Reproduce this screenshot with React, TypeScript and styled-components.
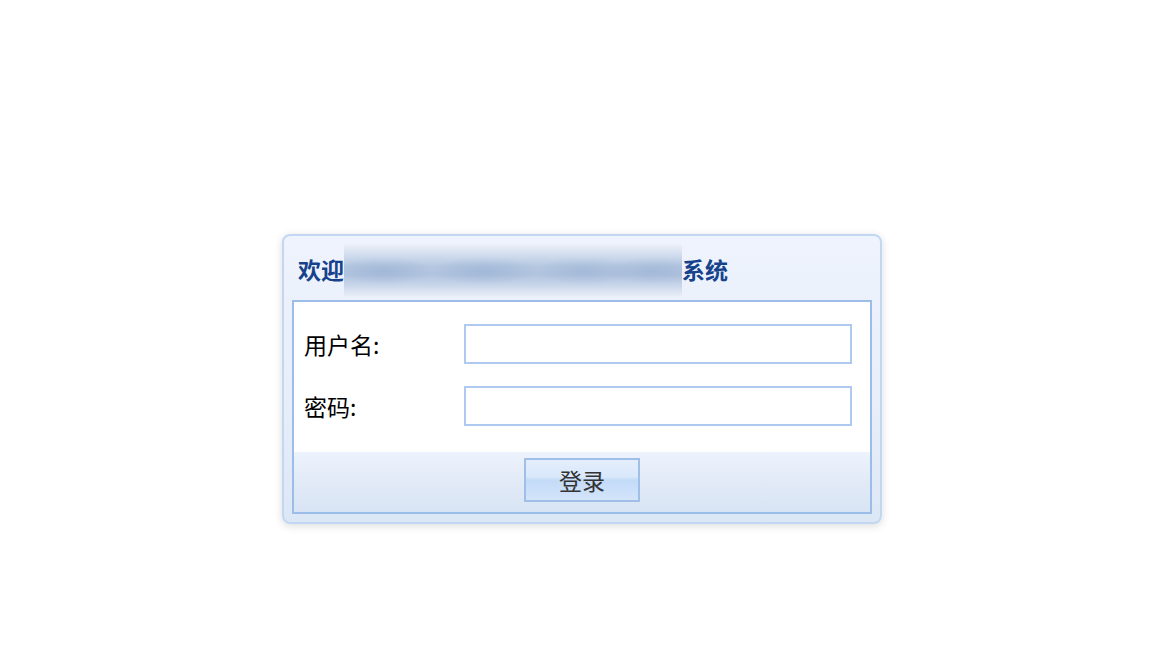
import { FunctionComponent } from "react";
import styled, { createGlobalStyle } from "styled-components";

const GlobalStyle = createGlobalStyle`
  html, body {
    margin: 0;
    padding: 0;
    background: #ffffff;
    font-family: "Liberation Sans", "Noto Sans CJK SC", sans-serif;
  }
`;

const Page = styled.div`
  width: 1172px;
  height: 664px;
  box-sizing: border-box;
  padding: 234px 0 0 282px;
`;

const Panel = styled.div`
  width: 600px;
  box-sizing: border-box;
  border: 2px solid #c2d7f1;
  border-radius: 8px;
  background: linear-gradient(180deg, #eef3fd 0%, #e7eefa 60%, #dce7f6 100%);
  box-shadow: 0 2px 8px rgba(0, 0, 0, 0.14);
  padding: 0 8px 8px 8px;
`;

const Header = styled.div`
  display: flex;
  flex-direction: row;
  align-items: center;
  padding: 8px 0 3px 6px;
  font-size: 23px;
  line-height: 24px;
  font-weight: bold;
  color: #15428b;
  font-family: "Noto Sans CJK SC", "Liberation Sans", sans-serif;
`;

const TitleText = styled.span`
  margin-top: -3px;
`;

const Blurred = styled.span`
  display: inline-block;
  width: 338px;
  height: 53px;
  background:
    radial-gradient(ellipse 50px 14px at 40px 27px, rgba(150, 175, 210, 0.6), transparent),
    radial-gradient(ellipse 55px 14px at 140px 27px, rgba(150, 175, 210, 0.6), transparent),
    radial-gradient(ellipse 50px 14px at 240px 27px, rgba(150, 175, 210, 0.5), transparent),
    radial-gradient(ellipse 50px 14px at 310px 27px, rgba(150, 175, 210, 0.55), transparent),
    linear-gradient(180deg, #edf1f9 0%, #cfdbed 22%, #b6c8e1 42%, #b2c4df 58%, #c8d6ea 78%, #ebf0f8 100%);
`;

const Body = styled.div`
  border: 2px solid #9dbde9;
  background: #ffffff;
`;

const Form = styled.div`
  display: grid;
  grid-template-columns: 160px 1fr;
  align-items: center;
  row-gap: 22px;
  padding: 22px 18px 26px 10px;
`;

const Label = styled.label`
  font-size: 23px;
  color: #000000;
  font-family: "Noto Sans CJK SC", "Liberation Sans", sans-serif;
`;

const Input = styled.input`
  height: 40px;
  box-sizing: border-box;
  border: 2px solid #aecaf0;
  background: #ffffff;
  outline: none;
  font-size: 18px;
  padding: 0 6px;
`;

const Footer = styled.div`
  display: flex;
  justify-content: center;
  padding: 6px 0 10px;
  background: linear-gradient(180deg, #edf3fd 0%, #e2eaf7 50%, #d8e4f4 100%);
`;

const LoginButton = styled.button`
  width: 116px;
  height: 44px;
  box-sizing: border-box;
  border: 2px solid #9fbfe9;
  background: linear-gradient(
    180deg,
    #e4eefc 0%,
    #d9e8fb 42%,
    #c3dbf8 50%,
    #c9def9 70%,
    #d4e5fa 100%
  );
  font-size: 23px;
  color: #333333;
  font-family: "Noto Sans CJK SC", "Liberation Sans", sans-serif;
  padding: 0;
  cursor: pointer;
`;

const App: FunctionComponent = () => {
  return (
    <Page>
      <GlobalStyle />
      <Panel>
        <Header>
          <TitleText>欢迎</TitleText>
          <Blurred />
          <TitleText>系统</TitleText>
        </Header>
        <Body>
          <Form>
            <Label htmlFor="username">用户名:</Label>
            <Input id="username" type="text" />
            <Label htmlFor="password">密码:</Label>
            <Input id="password" type="password" />
          </Form>
          <Footer>
            <LoginButton>登录</LoginButton>
          </Footer>
        </Body>
      </Panel>
    </Page>
  );
};

export default App;
